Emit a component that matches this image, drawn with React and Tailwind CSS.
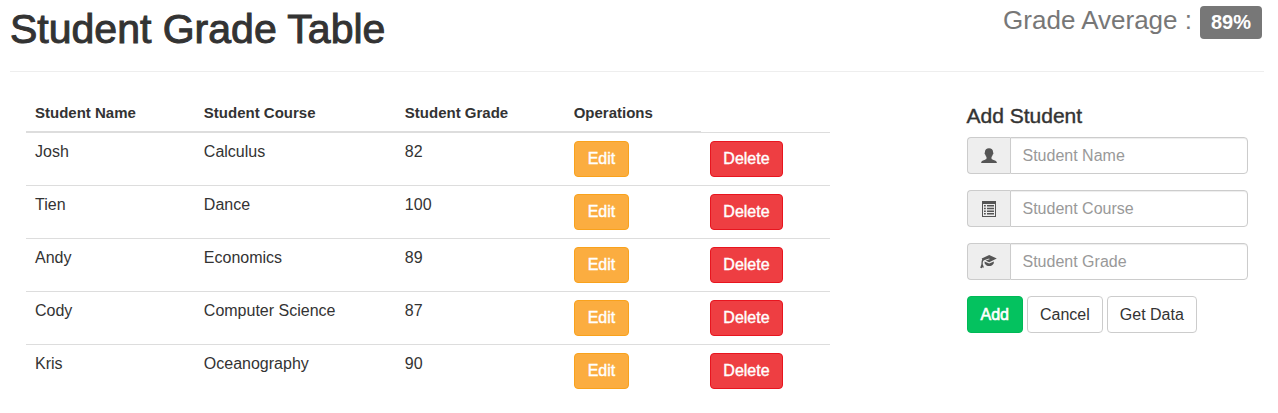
import React from "react";

const students = [
  { name: "Josh", course: "Calculus", grade: 82 },
  { name: "Tien", course: "Dance", grade: 100 },
  { name: "Andy", course: "Economics", grade: 89 },
  { name: "Cody", course: "Computer Science", grade: 87 },
  { name: "Kris", course: "Oceanography", grade: 90 },
];

function UserIcon() {
  return (
    <svg width="16" height="16" viewBox="0 0 16 16" fill="currentColor" aria-hidden="true">
      <path d="M8 0.2C5.5 0.2 3.9 1.8 3.9 4.2C3.9 4.6 3.5 4.8 3.6 5.5C3.7 6.2 4.2 6.4 4.4 7C4.7 8 5.1 8.6 5.5 9.1V10.6C5.5 11.1 5 11.4 4.2 11.7C2.2 12.4 0.3 12.9 0.2 14.2V15H15.8V14.2C15.7 12.9 13.8 12.4 11.8 11.7C11 11.4 10.5 11.1 10.5 10.6V9.1C10.9 8.6 11.3 8 11.6 7C11.8 6.4 12.3 6.2 12.4 5.5C12.5 4.8 12.1 4.6 12.1 4.2C12.1 1.8 10.5 0.2 8 0.2Z" />
    </svg>
  );
}

function ListIcon() {
  return (
    <svg width="16" height="16" viewBox="0 0 16 16" fill="currentColor" aria-hidden="true">
      <path fillRule="evenodd" d="M1 0H15V16H1ZM2 3V15H14V3Z" />
      <path d="M3 4h1.8v1.5H3zM6 4h7v1.5H6zM3 6.7h1.8v1.5H3zM6 6.7h7v1.5H6zM3 9.4h1.8v1.5H3zM6 9.4h7v1.5H6zM3 12.1h1.8v1.5H3zM6 12.1h7v1.5H6z" />
    </svg>
  );
}

function EducationIcon() {
  return (
    <svg width="17" height="16" viewBox="0 0 17 16" fill="currentColor" aria-hidden="true">
      <path d="M9.2 1L16.8 4.6L9.2 8.2L5.6 6.5L9.6 5.2L9.2 4.5L4 6.2C3.3 6.5 2.9 7.2 2.8 8.2L2.7 10L4 13.8L2.7 13.2L1.6 14.2L0.2 13.8L1.4 10.2L1.5 8C1.5 7 1.8 6.2 2.2 5.5L1.7 4.6Z" />
      <path d="M4.6 7.4L9.2 9.5L13.8 7.4V9.2C12.8 11.2 11 12 9.2 12C7.4 12 5.6 11.2 4.6 9.2Z" />
    </svg>
  );
}

const fields = [
  { id: "student-name", label: "Student Name", Icon: UserIcon },
  { id: "student-course", label: "Student Course", Icon: ListIcon },
  { id: "student-grade", label: "Student Grade", Icon: EducationIcon },
];

function Button({ className, children }) {
  return (
    <button
      type="button"
      className={`rounded border text-base leading-[22px] whitespace-nowrap ${className}`}
    >
      {children}
    </button>
  );
}

export default function App() {
  return (
    <div className="bg-white pr-[14px] pb-4 pl-[10px] font-['Liberation_Sans',Arial,sans-serif] text-base leading-[22px] text-[#333]">
      <header className="flex items-start justify-between border-b border-[#eee] pt-[7px] pb-5">
        <h1 className="text-[41px] leading-[44px] [-webkit-text-stroke:1px_#333]">
          Student Grade Table
        </h1>
        <p className="mr-[2px] flex items-start gap-2 text-[26px] leading-[26px] text-[#777]">
          Grade Average :
          <span className="-mt-px rounded bg-[#777] px-[11px] py-[6px] text-xl leading-[21px] font-bold text-white">
            89%
          </span>
        </p>
      </header>

      <main className="grid grid-cols-12">
        <section className="col-span-8 px-4 pt-[21px]">
          <table className="w-full table-fixed border-collapse text-left">
            <thead>
              <tr className="text-[15px]">
                <th className="w-[21%] border-b-2 border-[#ddd] px-[9px] pt-[9px] pb-[7px]">Student Name</th>
                <th className="w-[25%] border-b-2 border-[#ddd] px-[9px] pt-[9px] pb-[7px]">Student Course</th>
                <th className="w-[21%] border-b-2 border-[#ddd] px-[9px] pt-[9px] pb-[7px]">Student Grade</th>
                <th className="w-[17%] border-b-2 border-[#ddd] px-[9px] pt-[9px] pb-[7px]">Operations</th>
              </tr>
            </thead>
            <tbody>
              {students.map((s) => (
                <tr key={s.name} className="align-top">
                  <td className="border-t border-[#ddd] px-[9px] py-2">{s.name}</td>
                  <td className="border-t border-[#ddd] px-[9px] py-2">{s.course}</td>
                  <td className="border-t border-[#ddd] px-[9px] py-2">{s.grade}</td>
                  <td className="border-t border-[#ddd] px-[9px] py-2">
                    <Button className="block h-9 border-[#f9a21c] bg-[#fbad40] px-[13px] text-white [-webkit-text-stroke:0.4px_#fff]">
                      Edit
                    </Button>
                  </td>
                  <td className="border-t border-[#ddd] px-[9px] py-2">
                    <Button className="block h-9 border-[#e8151f] bg-[#ee3e42] px-3 text-white [-webkit-text-stroke:0.4px_#fff]">
                      Delete
                    </Button>
                  </td>
                </tr>
              ))}
            </tbody>
          </table>
        </section>

        <form className="col-span-3 col-start-10 flex flex-col gap-4 px-4 pt-8">
          <h2 className="-mb-[7px] text-[21px] leading-6 [-webkit-text-stroke:0.4px_#333]">
            Add Student
          </h2>
          {fields.map(({ id, label, Icon }) => (
            <div key={id} className="flex h-[37px]">
              <label
                htmlFor={id}
                aria-label={label}
                className="flex w-[43px] shrink-0 items-center justify-center rounded-l border border-r-0 border-[#ccc] bg-[#eee] text-[#555]"
              >
                <Icon />
              </label>
              <input
                id={id}
                type="text"
                placeholder={label}
                className="w-full min-w-0 rounded-r border border-[#ccc] bg-white px-3 text-[#555] shadow-[inset_0_1px_1px_rgba(0,0,0,0.075)] placeholder:text-[#999]"
              />
            </div>
          ))}
          <div className="flex gap-1">
            <Button className="h-[37px] border-[#00b956] bg-[#04c25f] px-[13px] text-white [-webkit-text-stroke:0.6px_#fff]">
              Add
            </Button>
            <Button className="h-[37px] border-[#ccc] bg-white px-3">Cancel</Button>
            <Button className="h-[37px] border-[#ccc] bg-white px-3">Get Data</Button>
          </div>
        </form>
      </main>
    </div>
  );
}
